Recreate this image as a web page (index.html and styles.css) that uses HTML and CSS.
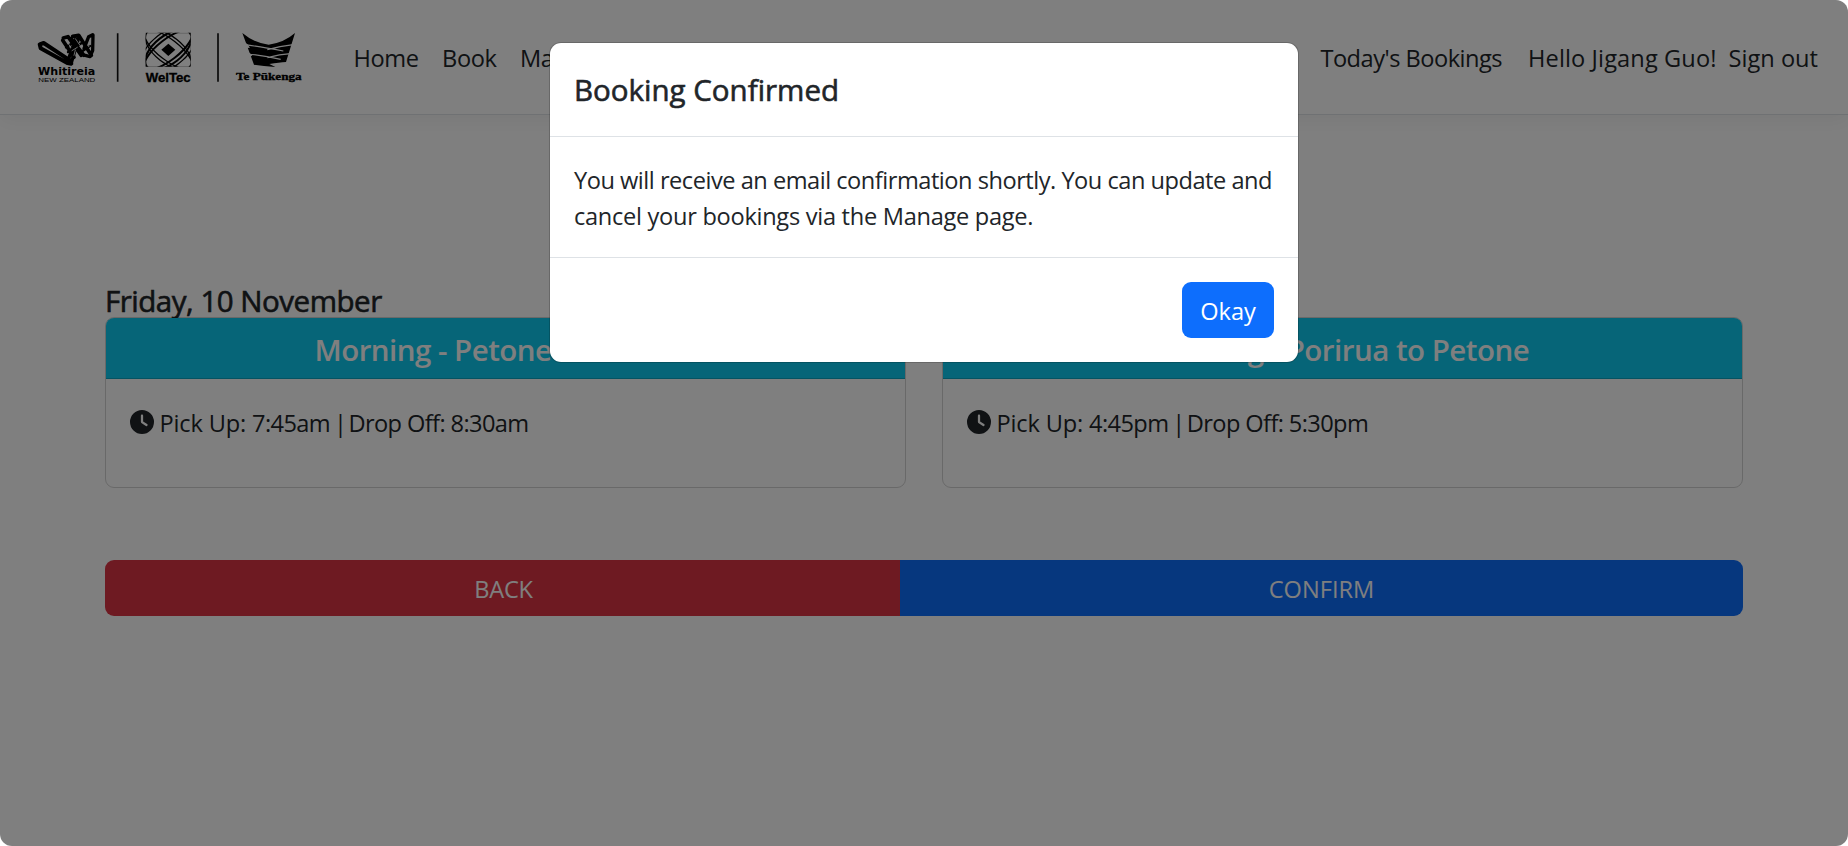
FILE: index.html
```html
<!DOCTYPE html>
<html lang="en">
<head>
<meta charset="utf-8">
<title>Booking Confirmed</title>
<link rel="stylesheet" href="styles.css">
</head>
<body>
<div class="page">
  <header class="navbar">
    <svg class="logos" viewBox="99 90 822 165" aria-label="Whitireia, WelTec, Te Pūkenga">
      <g stroke="#000" stroke-linejoin="round" stroke-linecap="round" fill="none">
        <path d="M119 133L131 129L211 182L214 191L202 189L122 145Z" stroke-width="12"/>
        <path d="M190 114L204 110L244 166M188 121L222 172M218 109L236 106L274 166M213 116L252 166" stroke-width="11"/>
        <path d="M237 110L214 188M227 116L206 176M278 104L266 110L252 146M279 105L278 152L270 170L256 166" stroke-width="10"/>
        <path d="M198 142L238 116M204 156L244 130M240 158L270 138" stroke-width="7"/>
        <path d="M199 122L212 142M226 116L240 136M216 152L232 142M222 166L226 150M270 122L266 140" stroke="#fff" stroke-width="2.5"/>
      </g>
      <text class="logo-whitireia" x="114" y="226" textLength="172" lengthAdjust="spacingAndGlyphs">Whitireia</text>
      <text class="logo-nz" x="115" y="246" textLength="171" lengthAdjust="spacingAndGlyphs">NEW ZEALAND</text>
      <path d="M353 100V245M654 100V245" stroke="#111" stroke-width="5"/>
      <clipPath id="weltec-frame"><rect x="437" y="98" width="135" height="102"/></clipPath>
      <g fill="none" stroke="#000" stroke-width="4" clip-path="url(#weltec-frame)">
        <rect x="438" y="99" width="133" height="100" stroke-width="1.5" opacity=".6"/>
        <ellipse cx="505" cy="149" rx="82" ry="40" transform="rotate(38 505 149)"/>
        <ellipse cx="505" cy="149" rx="88" ry="31" transform="rotate(38 505 149)"/>
        <ellipse cx="505" cy="149" rx="82" ry="42" transform="rotate(-38 505 149)" stroke-width="6"/>
        <ellipse cx="505" cy="149" rx="88" ry="31" transform="rotate(-38 505 149)" stroke-width="6"/>
        <ellipse cx="505" cy="149" rx="98" ry="52" transform="rotate(-38 505 149)"/>
      </g>
      <path d="M505 131L526 149L505 168L484 149Z"/>
      <text class="logo-weltec" x="437" y="246" textLength="135" lengthAdjust="spacingAndGlyphs">WelTec</text>
      <path d="M727 99Q764 130 806 134Q852 128 885 99L858 186Q838 187 808 192L826 201Q790 198 762 194Z"/>
      <path d="M880 134Q840 138 802 149M734 134Q776 139 850 153M872 161Q840 163 802 173M742 162Q790 166 842 178" stroke="#fff" stroke-width="3.5" fill="none"/>
      <path d="M733 127L742 144L750 143L742 132ZM741 156L749 170L757 167L750 160Z" fill="#fff"/>
      <text class="logo-pukenga" x="708" y="240" textLength="197" lengthAdjust="spacingAndGlyphs">Te Pūkenga</text>
    </svg>
    <nav class="nav-main">
      <a>Home</a>
      <a>Book</a>
      <a>Manage</a>
    </nav>
    <nav class="nav-user">
      <a class="nav-today">Today's Bookings</a>
      <a class="nav-hello">Hello Jigang Guo!</a>
      <a class="nav-signout">Sign out</a>
    </nav>
  </header>
  <main class="content">
    <h5 class="date">Friday, 10 November</h5>
    <div class="cards">
      <section class="card">
        <div class="card-header">Morning - Petone to Porirua</div>
        <div class="card-body">
          <svg class="clock" viewBox="0 0 512 512"><path d="M256 0a256 256 0 1 1 0 512A256 256 0 1 1 256 0zM232 120V256c0 8 4 15.500 10.700 20l96 64c11 7.400 25.900 4.400 33.300-6.700s4.400-25.900-6.700-33.300L280 243.200V120c0-13.300-10.700-24-24-24s-24 10.700-24 24z"/></svg>
          <div><span class="label">Pick Up: </span>7:45am<span class="divider"> | </span>Drop Off: 8:30am</div>
        </div>
      </section>
      <section class="card">
        <div class="card-header">Evening - Porirua to Petone</div>
        <div class="card-body">
          <svg class="clock" viewBox="0 0 512 512"><path d="M256 0a256 256 0 1 1 0 512A256 256 0 1 1 256 0zM232 120V256c0 8 4 15.500 10.700 20l96 64c11 7.400 25.900 4.400 33.300-6.700s4.400-25.900-6.700-33.300L280 243.200V120c0-13.300-10.700-24-24-24s-24 10.700-24 24z"/></svg>
          <div><span class="label">Pick Up: </span>4:45pm<span class="divider"> | </span>Drop Off: 5:30pm</div>
        </div>
      </section>
    </div>
    <div class="btn-group">
      <button class="btn btn-back">BACK</button>
      <button class="btn btn-confirm">CONFIRM</button>
    </div>
  </main>
  <div class="backdrop">
    <div class="modal">
      <div class="modal-header">Booking Confirmed</div>
      <div class="modal-body">
        <span class="line-1">You will receive an email confirmation shortly. You can update and</span><br>
        <span class="line-2">cancel your bookings via the Manage page.</span>
      </div>
      <div class="modal-footer"><button class="btn btn-okay">Okay</button></div>
    </div>
  </div>
</div>
</body>
</html>
```
FILE: styles.css
```css
* { box-sizing: border-box; }

body {
  margin: 0;
  background: #fff;
  color: #212529;
  font: 400 23.6px/36px "Open Sans", "Noto Sans", sans-serif;
}

.page {
  position: relative;
  width: 1848px;
  height: 846px;
  overflow: hidden;
  border-radius: 12px;
  background: #fff;
}

.navbar {
  display: flex;
  align-items: flex-start;
  height: 115px;
  padding: 30px 30px 0 33px;
  border-bottom: 1px solid #dee2e6;
  box-shadow: 0 6px 18px rgba(0, 0, 0, .05);
}

.logos { width: 274px; height: 55px; flex: none; }
.logo-whitireia { font: 700 29px "DejaVu Sans", sans-serif; }
.logo-nz { font: 400 18px "Liberation Sans", sans-serif; }
.logo-weltec { font: 700 40px "Liberation Sans", sans-serif; stroke: #000; stroke-width: 1px; }
.logo-pukenga { font: 700 33px "Liberation Serif", serif; stroke: #000; stroke-width: 1px; }

.nav-main, .nav-user { display: flex; padding-top: 10px; white-space: nowrap; }
.nav-main { gap: 23.5px; padding-left: 46.5px; letter-spacing: -.4px; }
.nav-user { margin-left: auto; }
.nav-today { letter-spacing: -.5px; }
.nav-hello { margin-left: 26px; letter-spacing: .12px; }
.nav-signout { margin-left: 12px; }

.content { padding: 168px 105px 0; }
.date {
  margin: 0;
  height: 34px;
  font-size: 29.5px;
  line-height: 36px;
  font-weight: 500;
  letter-spacing: -.48px;
  white-space: nowrap;
  -webkit-text-stroke: .6px currentColor;
}

.cards { display: grid; grid-template-columns: 801px 801px; gap: 36px; }
.card { height: 171px; border: 1px solid rgba(0, 0, 0, .175); border-radius: 9px; overflow: hidden; }
.card-header {
  height: 61px;
  padding-top: 12px;
  border-bottom: 1px solid rgba(0, 0, 0, .175);
  background: #0dcaf0;
  color: #fff;
  font-size: 29.5px;
  font-weight: 600;
  line-height: 39px;
  letter-spacing: -.52px;
  text-align: center;
  white-space: nowrap;
}
.card-body { display: flex; padding: 26px 24px; gap: 5.5px; letter-spacing: -.6px; white-space: nowrap; }
.label { letter-spacing: -.15px; }
.divider { letter-spacing: -2.3px; }
.clock { width: 24px; height: 24px; margin-top: 5px; fill: currentColor; }

.btn { border: 0; color: #fff; font: inherit; height: 56px; padding: 2px 0 0; }
.btn-group { display: flex; margin-top: 72px; height: 56px; border-radius: 9px; overflow: hidden; }
.btn-back { width: 795px; padding-left: 2px; letter-spacing: -.3px; background: #dc3545; }
.btn-confirm { flex: 1; background: #0d6efd; }

.backdrop { position: absolute; inset: 0; padding-top: 42px; background: rgba(0, 0, 0, .5); }
.modal {
  width: 750px;
  height: 321px;
  margin: 0 auto;
  border: 1px solid rgba(0, 0, 0, .175);
  border-radius: 12px;
  background: #fff;
  background-clip: padding-box;
}
.modal-header {
  height: 94px;
  padding: 27px 24px 0;
  border-bottom: 1px solid #dee2e6;
  font-size: 29.5px;
  font-weight: 500;
  line-height: 40px;
  -webkit-text-stroke: .6px currentColor;
}
.modal-body { height: 121px; padding: 25px 24px 0; border-bottom: 1px solid #dee2e6; white-space: nowrap; }
.line-1 { letter-spacing: -.48px; }
.line-2 { letter-spacing: -.28px; }
.modal-footer { display: flex; justify-content: flex-end; padding: 24px; }
.btn-okay { width: 92px; border-radius: 9px; background: #0d6efd; }
```
